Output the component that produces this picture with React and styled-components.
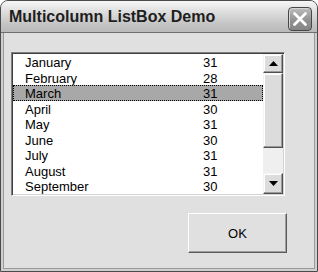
import React from "react";
import styled, { createGlobalStyle } from "styled-components";

const Global = createGlobalStyle`
  html, body { margin: 0; padding: 0; background: #ffffff; }
  body { font-family: "Liberation Sans", Arial, sans-serif; }
`;

const Window = styled.div`
  width: 318px;
  height: 272px;
  box-sizing: border-box;
  border: 1px solid #4a4a4a;
  border-radius: 8px 8px 0 0;
  background: #cfcfcf;
  display: flex;
  flex-direction: column;
  overflow: hidden;
`;

const TitleBar = styled.div`
  height: 31px;
  flex: none;
  display: flex;
  align-items: center;
  justify-content: space-between;
  padding: 0 5px 0 8px;
  background: linear-gradient(#f6f6f6 0%, #dedede 35%, #c4c4c4 75%, #b9b9b9 100%);
  border-bottom: 1px solid #6e6e6e;
`;

const Title = styled.span`
  font: bold 16px "Liberation Sans", Arial, sans-serif;
  color: #1e1e1e;
  padding-top: 1px;
`;

const CloseButton = styled.div`
  width: 24px;
  height: 24px;
  margin-top: 4px;
  box-sizing: border-box;
  border: 1px solid #474747;
  border-radius: 4px;
  background: linear-gradient(#bdbdbd, #929292 55%, #868686);
  box-shadow: inset 1px 1px 0 #d4d4d4;
  display: flex;
  align-items: center;
  justify-content: center;
`;

const Frame = styled.div`
  flex: 1;
  display: flex;
  padding: 0 2px 2px;
`;

const Client = styled.div`
  flex: 1;
  background: #e0e0e0;
  border: 1px solid #9a9a9a;
  border-top: none;
  display: flex;
  flex-direction: column;
  padding: 19px 0 0 7px;
`;

const ListBox = styled.div`
  width: 274px;
  height: 144px;
  box-sizing: border-box;
  border-top: 1px solid #808080;
  border-left: 1px solid #808080;
  border-bottom: 1px solid #ffffff;
  border-right: 1px solid #ffffff;
  padding: 1px;
  box-shadow: inset 1px 1px 0 #404040, inset -1px -1px 0 #d4d4d4;
  background: #ffffff;
  display: flex;
`;

const Items = styled.div`
  flex: 1;
  display: flex;
  flex-direction: column;
  background: #ffffff;
  overflow: hidden;
`;

const Row = styled.div`
  display: grid;
  grid-template-columns: 178px auto;
  padding-left: 11px;
  height: 15.55px;
  font-size: 13px;
  color: #000;
  box-sizing: border-box;
  border: 1px dotted ${(p) => (p.$selected ? "#000" : "transparent")};
  background: ${(p) => (p.$selected ? "#a8a8a8" : "transparent")};
  & > span { line-height: 13.55px; padding-top: 1px; }
`;

const ScrollBar = styled.div`
  width: 20px;
  display: flex;
  flex-direction: column;
  background: #efefef;
`;

const ScrollBtn = styled.div`
  height: ${(p) => p.$h}px;
  flex: none;
  box-sizing: border-box;
  background: #dcdcdc;
  border-top: 1px solid #f4f4f4;
  border-left: 1px solid #f4f4f4;
  border-right: 1px solid #505050;
  border-bottom: 1px solid #505050;
  box-shadow: inset -1px -1px 0 #9a9a9a, inset 1px 1px 0 #ffffff;
  display: flex;
  align-items: center;
  justify-content: center;
`;

const Thumb = styled(ScrollBtn)``;

const Track = styled.div`
  flex: 1;
  background: #efefef;
`;

const Footer = styled.div`
  display: flex;
  justify-content: flex-end;
  padding: 17px 27px 0 0;
`;

const OkButton = styled.div`
  width: 99px;
  height: 40px;
  box-sizing: border-box;
  background: #e0e0e0;
  border-top: 1px solid #ffffff;
  border-left: 1px solid #ffffff;
  border-right: 1px solid #5a5a5a;
  border-bottom: 1px solid #5a5a5a;
  box-shadow: inset -1px -1px 0 #a0a0a0;
  display: flex;
  align-items: center;
  justify-content: center;
  font-size: 13px;
  color: #000;
`;

const Arrow = ({ up }) => (
  <svg width="9" height="5" viewBox="0 0 9 5">
    {up ? (
      <polygon points="4.5,0 9,5 0,5" fill="#000" />
    ) : (
      <polygon points="0,0 9,0 4.5,5" fill="#000" />
    )}
  </svg>
);

const months = [
  ["January", 31],
  ["February", 28],
  ["March", 31],
  ["April", 30],
  ["May", 31],
  ["June", 30],
  ["July", 31],
  ["August", 31],
  ["September", 30],
];

export default function App() {
  return (
    <>
      <Global />
      <Window>
        <TitleBar>
          <Title>Multicolumn ListBox Demo</Title>
          <CloseButton>
            <svg width="16" height="16" viewBox="0 0 16 16">
              <path d="M2.5 2.5 L13.5 13.5 M13.5 2.5 L2.5 13.5" stroke="#ffffff" strokeWidth="2.8" strokeLinecap="round" />
            </svg>
          </CloseButton>
        </TitleBar>
        <Frame>
          <Client>
            <ListBox>
              <Items>
                {months.map(([m, d], i) => (
                  <Row key={m} $selected={i === 2}>
                    <span>{m}</span>
                    <span>{d}</span>
                  </Row>
                ))}
              </Items>
              <ScrollBar>
                <ScrollBtn $h={19}>
                  <Arrow up />
                </ScrollBtn>
                <Thumb $h={75} />
                <Track />
                <ScrollBtn $h={21}>
                  <Arrow />
                </ScrollBtn>
              </ScrollBar>
            </ListBox>
            <Footer>
              <OkButton>OK</OkButton>
            </Footer>
          </Client>
        </Frame>
      </Window>
    </>
  );
}
